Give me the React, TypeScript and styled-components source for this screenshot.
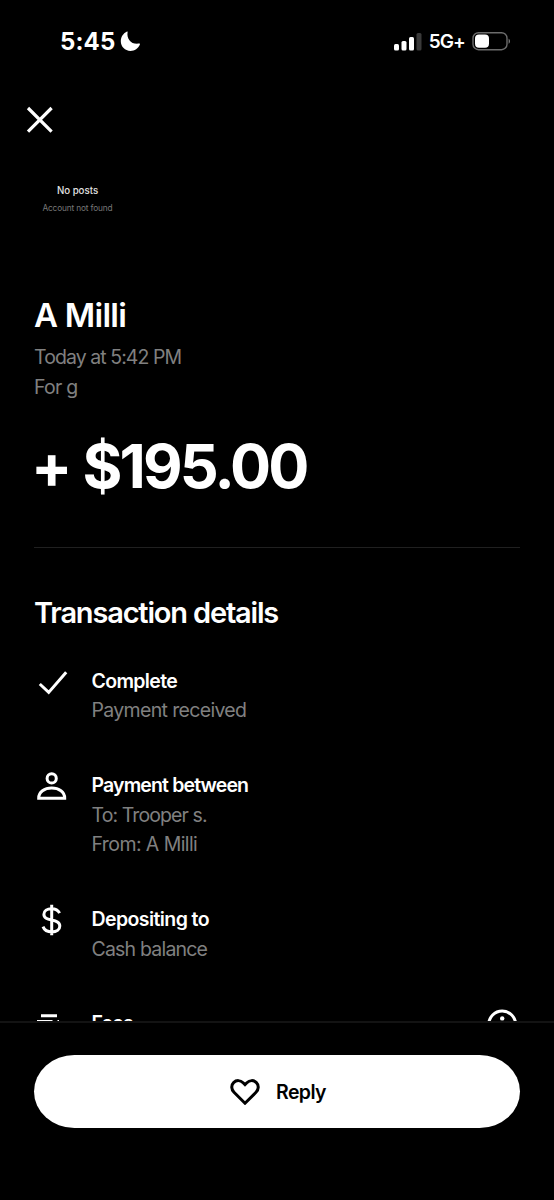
import React from "react";
import styled, { createGlobalStyle } from "styled-components";

const GlobalStyle = createGlobalStyle`
  * { box-sizing: border-box; }
  body { margin: 0; background: #000; }
`;

const Screen = styled.div`
  display: flex;
  flex-direction: column;
  width: 554px;
  height: 1200px;
  overflow: hidden;
  background: #000;
  color: #fff;
  font-family: Inter, "Liberation Sans", sans-serif;
`;

interface TextProps {
  $size: number;
  $line: number;
  $weight?: number;
  $tracking?: number;
  $color?: string;
}

const Text = styled.div<TextProps>`
  font-size: ${(p) => p.$size}px;
  line-height: ${(p) => p.$line}px;
  font-weight: ${(p) => p.$weight ?? 400};
  letter-spacing: ${(p) => p.$tracking ?? 0}px;
  color: ${(p) => p.$color ?? "inherit"};
  white-space: pre;
`;

const Amount = styled(Text)`
  margin-left: -3px;
  word-spacing: 1.5px;
`;

const StatusBar = styled.header`
  display: flex;
  flex: none;
  align-items: center;
  justify-content: space-between;
  height: 82px;
  padding: 1px 43px 0 60px;
`;

const StatusGroup = styled.div<{ $gap: number }>`
  display: flex;
  align-items: center;
  gap: ${(p) => p.$gap}px;
`;

const CloseButton = styled.button`
  display: flex;
  flex: none;
  width: 28px;
  height: 28px;
  margin: 24px 0 0 26px;
  padding: 0;
  border: 0;
  background: none;
  color: inherit;
`;

const Content = styled.main`
  display: flex;
  flex: 1;
  flex-direction: column;
  min-height: 0;
  overflow: hidden;
  padding: 0 34px;
`;

const Avatar = styled.div`
  display: flex;
  flex: none;
  flex-direction: column;
  align-items: center;
  justify-content: center;
  width: 87px;
  height: 87px;
  margin-top: 22px;
`;

const Summary = styled.section`
  flex: none;
  margin-top: 52px;
  padding-bottom: 45px;
  border-bottom: 1px solid #202020;
`;

const Meta = styled.div`
  margin: 8px 0 28px;
`;

const Details = styled.section`
  flex: none;
  padding-top: 47px;
`;

const Rows = styled.div`
  display: flex;
  flex-direction: column;
  gap: 45.2px;
  margin-top: 35.5px;
`;

const Row = styled.div`
  display: flex;
  align-items: flex-start;
`;

const RowIcon = styled.div`
  display: flex;
  flex: none;
  width: 36px;
  height: 36px;
  margin: -1px 21.5px 0 0;
`;

const RowAction = styled.div`
  display: flex;
  flex: none;
  margin-top: -1px;
`;

const RowBody = styled.div`
  flex: 1;
`;

const Footer = styled.footer`
  flex: none;
  height: 179px;
  padding: 31.5px 34px 0;
  border-top: 2px solid #131313;
`;

const ReplyButton = styled.button`
  display: flex;
  align-items: center;
  justify-content: center;
  gap: 16px;
  width: 100%;
  height: 73.5px;
  padding: 1px 0 0 2px;
  border: 0;
  border-radius: 41px / 37px;
  background: #fff;
  color: #000;
  font-family: inherit;
`;

const ReplyLabel = styled(Text)`
  padding-top: 2px;
`;

const Icon = ({ children, w = 36, h = 36, sw = 3 }: { children: React.ReactNode; w?: number; h?: number; sw?: number }) => (
  <svg width={w} height={h} viewBox={`0 0 ${w} ${h}`} fill="none" stroke="currentColor" strokeWidth={sw}>
    {children}
  </svg>
);

const CheckIcon = () => (
  <Icon>
    <path d="M5.8 18 14.7 26.4 32.2 6.2" />
  </Icon>
);

const PersonIcon = () => (
  <Icon>
    <circle cx="17.7" cy="8.4" r="4.6" />
    <path d="M4.7 28.2C4.7 21.9 10.4 18 17.7 18S30.7 21.9 30.7 28.2Z" />
  </Icon>
);

const DollarIcon = () => (
  <Icon>
    <path d="M17.7 .8V31.2M25.6 9.2C24 6 21.2 4.7 17.7 4.7C13 4.7 9.9 7 9.9 10.3C9.9 14.2 13.2 15 17.7 16C22.4 17 25.8 18.1 25.8 22C25.8 25.6 22.6 27.9 17.9 27.9C13.3 27.9 10.4 26.2 9 22.6" />
  </Icon>
);

const FeesIcon = () => (
  <Icon>
    <path d="M7 7.7H23M3 13.4H18.5M23.5 13.4H25M7 19.6H23" />
  </Icon>
);

const InfoIcon = () => (
  <Icon>
    <circle cx="18.2" cy="16.6" r="13.5" />
    <circle cx="18.2" cy="10.4" r="2.2" fill="currentColor" stroke="none" />
    <path d="M18.2 15V23" />
  </Icon>
);

const DIM = "#808080";

interface DetailProps {
  icon: React.ReactNode;
  title: string;
  titleTracking: number;
  lines?: [string, number][];
  trailing?: React.ReactNode;
}

const Detail = ({ icon, title, titleTracking, lines = [], trailing }: DetailProps) => (
  <Row>
    <RowIcon>{icon}</RowIcon>
    <RowBody>
      <Text $size={19.5} $line={29.6} $weight={600} $tracking={titleTracking}>{title}</Text>
      {lines.map(([text, tracking]) => (
        <Text key={text} $size={19.5} $line={29.6} $tracking={tracking} $color={DIM}>{text}</Text>
      ))}
    </RowBody>
    {trailing && <RowAction>{trailing}</RowAction>}
  </Row>
);

export default function App() {
  return (
    <Screen>
      <GlobalStyle />
      <StatusBar>
        <StatusGroup $gap={5}>
          <Text $size={24} $line={30} $weight={750} $tracking={0.1}>5:45</Text>
          <svg width="21" height="21" viewBox="0 0 21 21" fill="currentColor">
            <path d="M7.6 .9C6.4 8 11.2 13.7 18.9 12.6C19.8 12.4 20.2 13 19.8 13.8C18.2 17.5 14.7 19.9 10.5 19.9C5 19.9 .8 15.7 .8 10.3C.8 6 3.2 2.4 6.6 .7C7.2 .4 7.7 .4 7.6 .9Z" />
          </svg>
        </StatusGroup>
        <StatusGroup $gap={7}>
          <svg width="28" height="18" viewBox="0 0 28 18" fill="currentColor">
            <rect x="0" y="11" width="5" height="6.5" rx="1.5" />
            <rect x="7.5" y="8" width="5" height="9.5" rx="1.5" />
            <rect x="15" y="4" width="5" height="13.5" rx="1.5" />
            <rect x="22.5" y="0" width="5" height="17.5" rx="1.5" fill="#3a3a3a" />
          </svg>
          <Text $size={19} $line={24} $weight={600} $tracking={-0.9}>5G+</Text>
          <svg width="39" height="20" viewBox="0 0 39 20">
            <rect x="1" y=".7" width="34" height="17" rx="5.5" fill="none" stroke="#6c6c6c" strokeWidth="1.4" />
            <rect x="3" y="2.6" width="14" height="13.2" rx="4" fill="#fff" />
            <path d="M36.6 6.8C38.5 7.6 38.5 11 36.6 11.8Z" fill="#777" />
          </svg>
        </StatusGroup>
      </StatusBar>
      <CloseButton aria-label="Close">
        <Icon w={28} h={28} sw={3.2}>
          <path d="M2 2 25.6 25.6M25.6 2 2 25.6" />
        </Icon>
      </CloseButton>
      <Content>
        <Avatar>
          <Text $size={9.7} $line={17} $weight={500} $color="#e2e2e2">No posts</Text>
          <Text $size={8.3} $line={18} $tracking={-0.15} $color="#777">Account not found</Text>
        </Avatar>
        <Summary>
          <Text $size={33} $line={40} $weight={600} $tracking={-0.75}>A Milli</Text>
          <Meta>
            <Text $size={19.5} $line={29.6} $tracking={-0.93} $color={DIM}>Today at 5:42 PM</Text>
            <Text $size={19.5} $line={29.6} $tracking={-0.75} $color={DIM}>For g</Text>
          </Meta>
          <Amount $size={61} $line={72} $weight={650} $tracking={-2.9}>+ $195.00</Amount>
        </Summary>
        <Details>
          <Text $size={29} $line={36} $weight={600} $tracking={-1.18}>Transaction details</Text>
          <Rows>
            <Detail icon={<CheckIcon />} title="Complete" titleTracking={-0.65} lines={[["Payment received", -0.66]]} />
            <Detail
              icon={<PersonIcon />}
              title="Payment between"
              titleTracking={-0.86}
              lines={[["To: Trooper s.", -0.9], ["From: A Milli", -0.58]]}
            />
            <Detail icon={<DollarIcon />} title="Depositing to" titleTracking={-0.58} lines={[["Cash balance", -0.8]]} />
            <Detail icon={<FeesIcon />} title="Fees" titleTracking={-0.8} trailing={<InfoIcon />} />
          </Rows>
        </Details>
      </Content>
      <Footer>
        <ReplyButton>
          <Icon w={30} h={26}>
            <path d="M15 24.2 4 13.3C1.2 10.5 1 6.2 3.6 3.6C6.3 .9 10.4 1 13.1 3.7L15 5.6 16.9 3.7C19.6 1 23.7 .9 26.4 3.6C29 6.2 28.8 10.5 26 13.3Z" />
          </Icon>
          <ReplyLabel $size={19.5} $line={29.6} $weight={600} $tracking={-0.6}>Reply</ReplyLabel>
        </ReplyButton>
      </Footer>
    </Screen>
  );
}
